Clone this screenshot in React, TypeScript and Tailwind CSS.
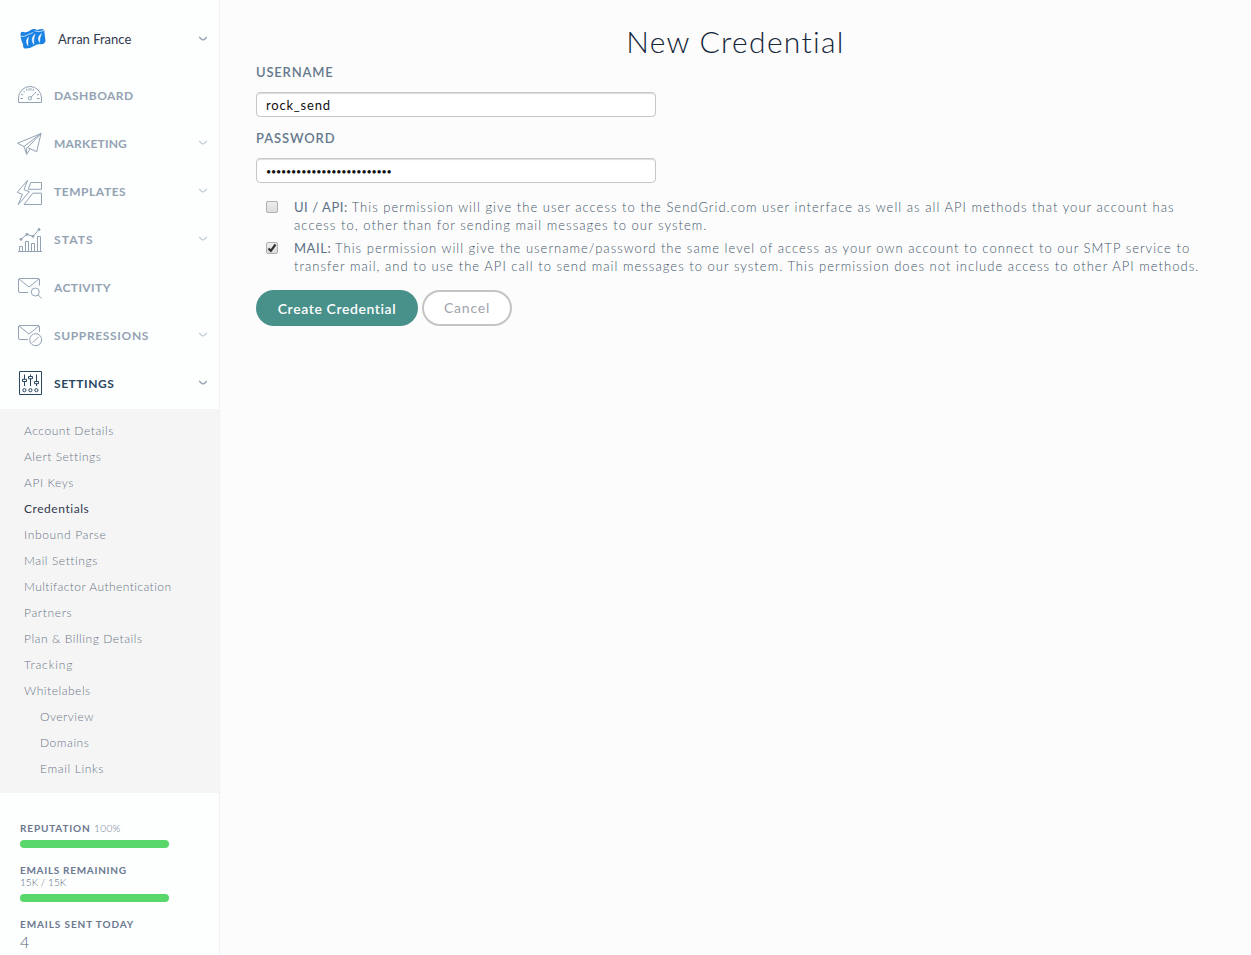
import type { ReactNode } from "react";

function Icon({ children }: { children: ReactNode }) {
  return (
    <svg width="28" height="28" viewBox="0 0 28 28" fill="none" stroke="currentColor" strokeWidth="1" className="shrink-0">
      {children}
    </svg>
  );
}

function Chevron({ className }: { className: string }) {
  return (
    <svg width="10" height="6" viewBox="0 0 10 6" fill="none" stroke="currentColor" strokeWidth="1.2" className={className}>
      <path d="M1 1.2C2.4 1.6 3.4 4 5 4S7.6 1.6 9 1.2" />
    </svg>
  );
}

const icons = {
  dashboard: (
    <Icon>
      <path d="M2.5 20.5V16A11.5 11.5 0 0 1 25.5 16V20.5Z" />
      <circle cx="13.9" cy="16.3" r="1.6" />
      <path d="M15.1 15.1L20 10" />
      <path d="M4.5 16.5H7M21 16.5H23.5M5 12.2L7 13M21 13L23 12.2M7.4 9L9 10.3M10.3 6.7L11 8.8M13 6.2V8.6M15 6.2V8.6M17.7 6.7L17 8.8" />
    </Icon>
  ),
  marketing: (
    <Icon>
      <path d="M25 3.5L1.5 13.3L8 16.5L25 3.5L11.5 17.5L20.7 21.7Z" />
      <path d="M8 16.5L10.6 24.3L14.2 19M10.6 24.3V17.6" />
    </Icon>
  ),
  templates: (
    <Icon>
      <path d="M11.6 2.3L1.3 14.3L6.3 16.3L2.3 26.5L13.3 13.8L8 11.6Z" />
      <path d="M14.7 4.5H25.5V11.3H12.3Z" />
      <path d="M16.8 15.2H25.5V26.5H8Z" />
    </Icon>
  ),
  stats: (
    <Icon>
      <path d="M2 25.5H26M3.5 25V20.5H6.5V25M9.5 25V15.5H12.5V25M15.5 25V17.5H18.5V25M21.5 25V10.5H24.5V25" />
      <path d="M5 13.3L11 8.3L17 10.3L23 3.5" />
      <circle cx="5" cy="13.3" r="1" fill="currentColor" />
      <circle cx="11" cy="8.3" r="1" fill="currentColor" />
      <circle cx="17" cy="10.3" r="1" fill="currentColor" />
      <circle cx="23" cy="3.5" r="1" fill="currentColor" />
    </Icon>
  ),
  activity: (
    <Icon>
      <path d="M23.5 11.5V6Q23.5 4.5 22 4.5H4Q2.5 4.5 2.5 6V17Q2.5 18.5 4 18.5H12M3 5L13 13L23 5" />
      <circle cx="19.3" cy="18" r="4" />
      <path d="M22.2 21L25.7 24.5" />
    </Icon>
  ),
  suppressions: (
    <Icon>
      <path d="M23.5 10V5Q23.5 3.5 22 3.5H4Q2.5 3.5 2.5 5V16Q2.5 17.5 4 17.5H12M3 4L13 12L23 4" />
      <circle cx="19.7" cy="17.7" r="6" />
      <path d="M16.7 20.7L22.7 14.7" />
    </Icon>
  ),
  settings: (
    <Icon>
      <path d="M3.5 1.5H25.5V24.5H3.5Z" />
      <path d="M8.5 4.5V9M8.5 12V16M14.5 4.5V6M14.5 9V16M20.5 4.5V11M20.5 14V16" />
      <path d="M6.5 9.3H10.5V11.5H6.5ZM12.5 6.5H16.5V8.7H12.5ZM18.5 11.5H22.5V13.7H18.5Z" />
      <circle cx="8.4" cy="20.2" r="1.6" />
      <circle cx="14.4" cy="20.2" r="1.6" />
      <circle cx="20.4" cy="20.2" r="1.6" />
    </Icon>
  ),
};

const nav = [
  { icon: icons.dashboard, label: "DASHBOARD", tracking: "tracking-[0.45px]", menu: false },
  { icon: icons.marketing, label: "MARKETING", tracking: "tracking-[0.2px]", menu: true },
  { icon: icons.templates, label: "TEMPLATES", tracking: "tracking-[0.55px]", menu: true },
  { icon: icons.stats, label: "STATS", tracking: "tracking-[1.1px]", menu: true },
  { icon: icons.activity, label: "ACTIVITY", tracking: "tracking-[0.4px]", menu: false },
  { icon: icons.suppressions, label: "SUPPRESSIONS", tracking: "tracking-[0.65px]", menu: true },
  { icon: icons.settings, label: "SETTINGS", tracking: "tracking-[0.55px]", menu: true },
];

const links = [
  { label: "Account Details", tracking: "tracking-[0.55px]" },
  { label: "Alert Settings", tracking: "tracking-[0.55px]" },
  { label: "API Keys", tracking: "tracking-[0.55px]" },
  { label: "Credentials", tracking: "tracking-[0.55px]", active: true },
  { label: "Inbound Parse", tracking: "tracking-[0.65px]" },
  { label: "Mail Settings", tracking: "tracking-[0.57px]" },
  { label: "Multifactor Authentication", tracking: "tracking-[0.44px]" },
  { label: "Partners", tracking: "tracking-[0.65px]" },
  { label: "Plan & Billing Details", tracking: "tracking-[0.55px]" },
  { label: "Tracking", tracking: "tracking-[0.9px]" },
  { label: "Whitelabels", tracking: "tracking-[0.53px]" },
  { label: "Overview", tracking: "tracking-[0.5px]", nested: true },
  { label: "Domains", tracking: "tracking-[0.55px]", nested: true },
  { label: "Email Links", tracking: "tracking-[0.65px]", nested: true },
];

function Sidebar() {
  return (
    <aside className="flex w-[220px] shrink-0 flex-col border-r border-[#f1f1f3] bg-[#fdfefe]">
      <div className="flex h-[72px] items-center pt-[7px] pr-[11px] pl-5">
        <svg width="26" height="22" viewBox="0 0 26 22" className="mr-3 mb-px shrink-0">
          <path d="M0.5 5.5Q1 3 3.5 4Q7 5 10 2.5Q14 0 17 2Q20 1 23 1Q25 2 24.5 5L25.5 13Q24 17 20 16Q17 16 14 18Q9 21 4.5 20.5Q2.5 19 3 16Q0.5 12 0.5 5.5Z" fill="#1a82e2" />
          <path d="M0.5 8.4Q4 9.2 8.5 6.5L13 4.5M14.5 3Q19 4.5 24 2.5" fill="none" stroke="#fdfefe" strokeWidth="0.7" />
          <path d="M8.5 9Q4.500 13 8 17.800Q7.500 13 8.500 9ZM15 6Q10 11 13.800 16.500Q13.200 11 15 6ZM21.500 5.500Q16.500 9.500 19.500 14.500Q19.500 10 21.500 5.500Z" fill="#fdfefe" stroke="#fdfefe" strokeWidth="0.4" />
        </svg>
        <span className="mb-0.5 text-[13px] leading-4 text-[#32394f]">Arran France</span>
        <Chevron className="mb-0.5 ml-auto text-[#8a98a8]" />
      </div>
      <nav>
        {nav.map((item) => {
          const active = item.label === "SETTINGS";
          return (
            <a
              key={item.label}
              className={`flex h-12 items-center pr-[11px] pl-4 ${active ? "text-[#294661]" : "text-[#93a3b3]"}`}
            >
              {item.icon}
              <span className={`ml-2.5 text-[12px] leading-4 font-bold ${item.tracking}`}>{item.label}</span>
              {item.menu && <Chevron className={`mb-0.5 ml-auto ${active ? "text-[#8a98a8]" : "text-[#c3ccd4]"}`} />}
            </a>
          );
        })}
      </nav>
      <div className="mt-px flex flex-col bg-[#f5f5f5] pt-[9px] pb-[11px]">
        {links.map((l) => (
          <a
            key={l.label}
            className={`text-[12px] leading-[26px] ${l.tracking} ${l.nested ? "pl-10" : "pl-6"} ${l.active ? "text-[#32394f]" : "font-light text-[#6b7688]"}`}
          >
            {l.label}
          </a>
        ))}
      </div>
      <div className="flex flex-col px-5 pt-[29px] text-[10px] leading-3 text-[#6b7890]">
        <p className="tracking-[0.85px]">
          <b>REPUTATION</b> <span className="font-light tracking-[0.4px]">100%</span>
        </p>
        <div className="mt-[6px] h-2 w-[149px] rounded-full bg-[#59d76b]" />
        <p className="mt-[16px] font-bold tracking-[0.7px]">EMAILS REMAINING</p>
        <p className="font-light tracking-[0.05px] text-[#56637a]">15K / 15K</p>
        <div className="mt-[6px] h-2 w-[149px] rounded-full bg-[#59d76b]" />
        <p className="mt-[16px] font-bold tracking-[0.9px]">EMAILS SENT TODAY</p>
        <p className="mt-0.5 text-[16px] leading-5 font-light text-[#56637a]">4</p>
      </div>
    </aside>
  );
}

type Line = { text: string; tracking: string };

function Permission({ checked, lines, name }: { checked: boolean; lines: Line[]; name: string }) {
  return (
    <label className="flex pl-2.5">
      <span className="mt-[3px] flex h-[12px] w-[12px] shrink-0 items-center justify-center rounded-[2px] border border-[#b0b0b0] bg-linear-to-b from-[#eeeeee] to-[#dcdcdc]">
        {checked && (
          <svg width="10" height="10" viewBox="0 0 10 10" fill="none" stroke="#333333" strokeWidth="2.2">
            <path d="M1.5 5.5L3.8 7.8L8.5 1.5" />
          </svg>
        )}
      </span>
      <span className="ml-4 flex flex-col text-[13px] leading-[18px] font-light text-[#42566a]">
        {lines.map((line, i) => (
          <span key={line.text} className={`whitespace-nowrap ${line.tracking}`}>
            {i === 0 && <span className="font-normal tracking-[0.55px] text-[#5c7186]">{name} </span>}
            {line.text}
          </span>
        ))}
      </span>
    </label>
  );
}

const field =
  "block h-[25px] w-[400px] rounded-[4px] border border-[#c8c8c8] bg-white px-[9px] pt-px text-[#111111] shadow-[inset_0_1px_1px_rgba(0,0,0,0.14)] outline-none";

export default function App() {
  return (
    <div className="flex h-[955px] w-[1251px] overflow-hidden bg-[#fcfcfc] font-['Lato',sans-serif]">
      <Sidebar />
      <main className="min-w-0 flex-1 px-9 pt-5">
        <h1 className="mb-px text-center text-[30px] leading-[42px] font-light tracking-[1.3px] text-[#14263a]">New Credential</h1>
        <label className="block text-[13px] leading-[18px] font-semibold tracking-[0.8px] text-[#65798c]">USERNAME</label>
        <input className={`mt-[11px] text-[13px] tracking-[0.8px] ${field}`} defaultValue="rock_send" />
        <label className="mt-[12px] block text-[13px] leading-[18px] font-semibold tracking-[0.9px] text-[#65798c]">PASSWORD</label>
        <input className={`mt-[11px] text-[9px] tracking-[-0.2px] ${field}`} type="password" defaultValue="xxxxxxxxxxxxxxxxxxxxxxxxx" />
        <div className="mt-[15px] flex flex-col gap-[5px]">
          <Permission
            checked={false}
            name="UI / API:"
            lines={[
              { text: "This permission will give the user access to the SendGrid.com user interface as well as all API methods that your account has", tracking: "tracking-[1.03px]" },
              { text: "access to, other than for sending mail messages to our system.", tracking: "tracking-[1.05px]" },
            ]}
          />
          <Permission
            checked
            name="MAIL:"
            lines={[
              { text: "This permission will give the username/password the same level of access as your own account to connect to our SMTP service to", tracking: "tracking-[1.02px]" },
              { text: "transfer mail, and to use the API call to send mail messages to our system. This permission does not include access to other API methods.", tracking: "tracking-[1.03px]" },
            ]}
          />
        </div>
        <div className="mt-[15px] flex gap-1">
          <button className="h-9 w-[162px] rounded-full bg-[#48908a] pt-px text-[14px] font-semibold tracking-[0.6px] text-white">Create Credential</button>
          <button className="h-9 w-[90px] rounded-full border-2 border-[#c4c4c4] bg-white pb-px text-[14px] tracking-[0.8px] text-[#a0a4ac]">Cancel</button>
        </div>
      </main>
    </div>
  );
}
